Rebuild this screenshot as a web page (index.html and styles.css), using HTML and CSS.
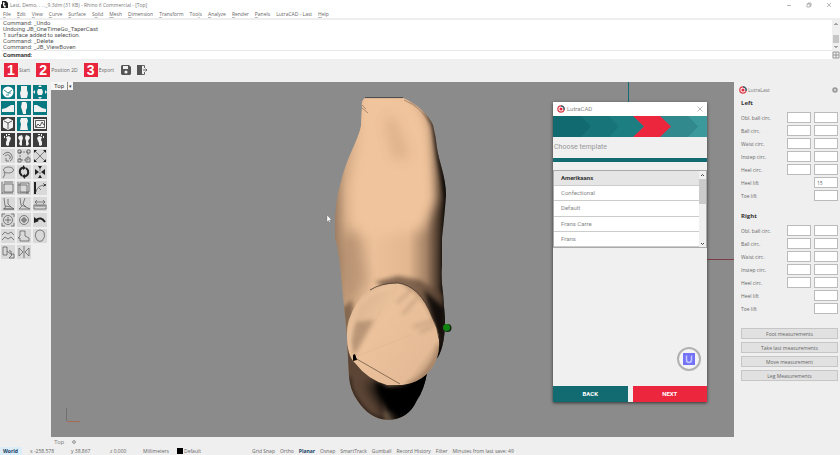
FILE: index.html
```html
<!DOCTYPE html>
<html lang="en">
<head>
<meta charset="utf-8">
<title>Last, Demo - Rhino 6 Commercial - [Top]</title>
<link rel="stylesheet" href="styles.css">
</head>
<body>
<header class="titlebar">
  <svg class="app-icon" viewBox="0 0 8 8"><path fill="#222" d="M1 0h4l2 2v5H1z"/><path fill="#fff" d="M2 1l2 1-1 2 2 1-1 2-2-2z"/><path fill="#222" d="M0 3l2 1 1 3H0z"/></svg>
  <h1 class="app-title">Last, Demo, . . ._9.3dm (31 KB) - Rhino 6 Commercial - [Top]</h1>
  <div class="window-controls">
    <button aria-label="Minimize"><svg viewBox="0 0 6 6"><path d="M1 3.500h4"/></svg></button>
    <button aria-label="Restore"><svg viewBox="0 0 6 6"><path d="M1 2h3v3H1zM2 2V1h3v3H4"/></svg></button>
    <button aria-label="Close"><svg viewBox="0 0 6 6"><path d="M1 1l4 4M5 1L1 5"/></svg></button>
  </div>
</header>
<nav class="menu">
  <a href="#"><u>F</u>ile</a><a href="#"><u>E</u>dit</a><a href="#"><u>V</u>iew</a><a href="#"><u>C</u>urve</a><a href="#"><u>S</u>urface</a><a href="#">S<u>o</u>lid</a><a href="#"><u>M</u>esh</a><a href="#"><u>D</u>imension</a><a href="#"><u>T</u>ransform</a><a href="#">Too<u>l</u>s</a><a href="#"><u>A</u>nalyze</a><a href="#"><u>R</u>ender</a><a href="#"><u>P</u>anels</a><a href="#">LutraCAD - Last</a><a href="#"><u>H</u>elp</a>
</nav>
<section class="console">
  <div class="console-text">
    <div class="history">
      <p>Command: _Undo</p>
      <p>Undoing JB_OneTimeGo_TaperCast</p>
      <p>1 surface added to selection.</p>
      <p>Command: _Delete</p>
      <p>Command: _JB_ViewBoven</p>
    </div>
    <div class="prompt"><label for="cmd">Command:</label><input id="cmd" type="text"></div>
  </div>
  <svg class="console-scroll" viewBox="0 0 8 39"><path fill="#f0f0f0" d="M0 0h8v39H0z"/><path fill="#c6c6c6" d="M1 15h6v8H1z"/><path fill="none" stroke="#555" d="M2.500 5L4 3.500 5.500 5M2.500 26L4 27.500 5.500 26"/><path fill="none" stroke="#888" stroke-width=".8" d="M1 32h6v6H1zM4 32v6M1 35h6"/></svg>
</section>
<div class="toolbar">
  <button class="step"><b>1</b><span>Start</span></button>
  <button class="step"><b>2</b><span>Position 2D</span></button>
  <button class="step"><b>3</b><span>Export</span></button>
  <button class="tool" aria-label="Save"><svg viewBox="0 0 12 12"><path fill="#555" d="M1 2l1-1h7l2 2v7l-1 1H2l-1-1z"/><path fill="#efefef" d="M3 2h5v3H3z"/><circle cx="6" cy="8" r="1.600" fill="#efefef"/></svg></button>
  <button class="tool" aria-label="Exit"><svg viewBox="0 0 12 12"><path fill="#555" d="M1 1h5v10H1z"/><path fill="none" stroke="#666" d="M6 1.500h2.500V4M6 10.500h2.500V8M7 6h4M9.500 4.500L11 6 9.500 7.500"/></svg></button>
</div>
<main class="workspace">
  <aside class="palette">
    <button class="teal" aria-label="Compass"><svg viewBox="0 0 14 14"><circle cx="7" cy="7" r="5.500" fill="#fff"/><path class="t" d="M3 5l4 3 4-3M7 8h3M5 10h3"/></svg></button>
    <button class="teal" aria-label="Last front"><svg viewBox="0 0 14 14"><path class="w" d="M4 1h6v4l1 3-1 5H4L3 8l1-3z"/></svg></button>
    <button class="teal" aria-label="Move view"><svg viewBox="0 0 14 14"><path class="w" d="M5 4h4l1 3-1 3H5L4 7zM7 0l2 2H5zM7 14l2-2H5zM0 7l2-2v4zM14 7l-2-2v4z"/></svg></button>
    <button class="teal" aria-label="Side left"><svg viewBox="0 0 14 14"><path class="w" d="M1 8l4-1 5-3h3v7H1z"/></svg></button>
    <button class="teal" aria-label="Top"><svg viewBox="0 0 14 14"><path class="w" d="M5 1h4l1 2v4l-1 2v4H6L5 9 4 6z"/></svg></button>
    <button class="teal" aria-label="Side right"><svg viewBox="0 0 14 14"><path class="w" d="M13 8L9 7 4 4H1v7h12z"/></svg></button>
    <button class="dark" aria-label="Perspective"><svg viewBox="0 0 14 14"><path class="w" d="M7 1l5 2.500v7L7 13l-5-2.500v-7z"/><path class="k" d="M3 4l4 2 4-2M7 6v6"/></svg></button>
    <button class="teal" aria-label="Last back"><svg viewBox="0 0 14 14"><path class="w" d="M4 1h6l1 3-1 3 1 6H3l1-6-1-3z"/></svg></button>
    <button class="dark" aria-label="Picture"><svg viewBox="0 0 14 14"><path class="w" d="M1 2h12v10H1z"/><path class="k" d="M2.500 3.500h9v7h-9zM3 10l2-3 2 2 2-4 2 3"/></svg></button>
    <button class="dark" aria-label="Left foot"><svg viewBox="0 0 14 14"><path class="w" d="M5 4l3-1 2 2-1 3-1 2v2l-1 1-2-1V9l1-2zM7 1h2v1H7zM5 1h1v2H5zM3 3h1v2H3z"/></svg></button>
    <button class="dark" aria-label="Both feet"><svg viewBox="0 0 14 14"><path class="w" d="M2 3l3-1 1 3-1 3v4l-1 1-2-2 1-3-2-3zM12 3L9 2 8 5l1 3v4l1 1 2-2-1-3 2-3z"/></svg></button>
    <button class="dark" aria-label="Right foot"><svg viewBox="0 0 14 14"><path class="w" d="M9 4L6 3 4 5l1 3 1 2v2l1 1 2-1V9L8 7zM5 1h2v1H5zM8 1h1v2H8zM10 3h1v2h-1z"/></svg></button>
    <button aria-label="Rotate"><svg viewBox="0 0 14 14"><path class="s" d="M2 6q4-5 8-1 3 5-1 7M4 7q3-3 5 0 1 3-1 3M5 9v3h3"/></svg></button>
    <button aria-label="Scale"><svg viewBox="0 0 14 14"><path class="s" stroke-dasharray="2 1" d="M3 3h8v8H3z"/><path class="s" d="M1 1h3v3H1zM10 1h3v3h-3zM1 10h3v3H1zM9 9h4v4H9z"/></svg></button>
    <button aria-label="Explode"><svg viewBox="0 0 14 14"><path class="s" stroke="#222" d="M2 2l10 10M12 2L2 12"/><path class="b" d="M1 1h3L1 4zM13 1v3l-3-3zM1 13v-3l3 3zM13 13h-3l3-3z"/></svg></button>
    <button aria-label="Lasso"><svg viewBox="0 0 14 14"><ellipse class="s" cx="7.500" cy="5" rx="5" ry="3"/><path class="s" d="M3 7l1 2-2 4"/></svg></button>
    <button aria-label="Cycle"><svg viewBox="0 0 14 14"><path class="h" d="M6 2.500Q2 4 3 8l2 3M8 11.500q4-1.500 3-6L9 3"/><path class="b" d="M6 0v5L9 3zM8 14V9l-3 2z"/></svg></button>
    <button aria-label="Mirror"><svg viewBox="0 0 14 14"><path class="s" stroke-dasharray="2 1" d="M7 1v12"/><path class="b" d="M2 4l4 3-4 3zM12 4L8 7l4 3zM5 1h4L7 4zM5 13h4l-2-3z"/></svg></button>
    <button aria-label="Bounding box"><svg viewBox="0 0 14 14"><path class="s" d="M3 3h9v8H3zM1 1v12M1 12h11M3 1h9"/></svg></button>
    <button aria-label="Box"><svg viewBox="0 0 14 14"><path class="s" d="M3 2h9v9H3zM1 4h9v9M1 1v11h11"/></svg></button>
    <button aria-label="Curve edit"><svg viewBox="0 0 14 14"><path class="h" d="M2 1v12"/><path class="s" d="M3 11q1-6 8-7M10 2l2 2-2 2M6 7l2 2"/><circle class="b" cx="12" cy="4" r="1"/></svg></button>
    <button aria-label="Heel left"><svg viewBox="0 0 14 14"><path class="s" stroke="#333" d="M3 1l1 8 6 1 3 2H3l2-3M7 2v5l3 3M2 12h11"/></svg></button>
    <button aria-label="Heel right"><svg viewBox="0 0 14 14"><path class="s" stroke="#333" d="M3 1l1 7 5 2 4 2H2l3-3M8 1L6 7l3 3"/></svg></button>
    <button aria-label="Ruler"><svg viewBox="0 0 14 14"><path class="s" d="M1 8h12v4H1zM3 8v2M5 8v2M7 8v2M9 8v2M11 8v2M2 5h10M4 3L2 5l2 2M10 3l2 2-2 2"/></svg></button>
    <button aria-label="Circle target"><svg viewBox="0 0 14 14"><circle class="s" cx="7" cy="7" r="4.500"/><path class="s" d="M7 4v6M4 7h6M1 4V1h3M10 1h3v3M1 10v3h3M10 13h3v-3"/></svg></button>
    <button aria-label="Circle center"><svg viewBox="0 0 14 14"><circle class="s" cx="7" cy="7" r="4.500"/><circle class="s" cx="7" cy="7" r="2"/><path class="s" d="M7 4v6M4 7h6"/></svg></button>
    <button aria-label="Undo"><svg viewBox="0 0 14 14"><path class="h" d="M3 7q5-4 9 2"/><path class="b" d="M1 4v6l5-2z"/></svg></button>
    <button aria-label="Waves"><svg viewBox="0 0 14 14"><path class="s" d="M1 6l3-3 3 2 3-2 3 3M1 11l3-3 3 2 3-2 3 3"/></svg></button>
    <button aria-label="Shoe"><svg viewBox="0 0 14 14"><path class="s" d="M3 2h5v5l4 2v3H3V9H1l2-2z"/></svg></button>
    <button aria-label="Sole"><svg viewBox="0 0 14 14"><path class="s" d="M3 3q4-4 8 0 2 5-2 9-3 1-5-1-3-4-1-8z"/></svg></button>
    <button aria-label="Drill"><svg viewBox="0 0 14 14"><path class="s" d="M2 2h4v8H2zM8 6h2v3h3v4H8l3-3-5-4"/></svg></button>
    <button aria-label="Flip"><svg viewBox="0 0 14 14"><path class="s" stroke="#999" d="M7 1v12M2 3l4 4-4 4zM12 3L8 7l4 4z"/></svg></button>
  </aside>
  <section class="viewport">
    <svg class="scene" viewBox="51 82 683 355" preserveAspectRatio="xMidYMin meet">
      <defs>
        <clipPath id="lastClip"><path d="M365 98H403Q424 107 433 125Q436 137 437 148C439 162 446 177 446 195Q445 210 442 238V265Q441 280 443 293L445 320Q445 345 438 357Q429 365 427 373Q424 390 417 400Q408 420 388 420Q369 419 357 400Q350 390 349 377L347 337L341 275Q339 252 335 238V218Q336 198 340 185Q345 165 353 148Q361 130 361 125L362 107Q361 101 365 98Z"/></clipPath>
        <clipPath id="discClip"><path id="disc" d="M398 283Q381 283 370 290Q361 295 357 303Q346 320 347 335Q347 356 355 363Q368 380 387 385H402Q425 382 435 363Q440 352 439 339Q438 328 432 317Q420 286 398 283Z"/></clipPath>
        <linearGradient id="skin" x1="335" x2="446" y1="0" y2="0" gradientUnits="userSpaceOnUse"><stop offset="0" stop-color="#a08065"/><stop offset=".1" stop-color="#cfa783"/><stop offset=".35" stop-color="#ecc19a"/><stop offset=".66" stop-color="#e3b891"/><stop offset=".82" stop-color="#a58266"/><stop offset=".95" stop-color="#3a2c21"/><stop offset="1" stop-color="#0e0a07"/></linearGradient>
        <linearGradient id="cap" x1="350" x2="438" y1="300" y2="365" gradientUnits="userSpaceOnUse"><stop offset="0" stop-color="#d9b38f"/><stop offset=".35" stop-color="#ebc29c"/><stop offset=".85" stop-color="#e4bb96"/><stop offset="1" stop-color="#b08c6e"/></linearGradient>
        <filter id="blur4" x="-50%" y="-50%" width="200%" height="200%"><feGaussianBlur stdDeviation="6"/></filter>
        <filter id="blur2" x="-50%" y="-50%" width="200%" height="200%"><feGaussianBlur stdDeviation="2"/></filter>
      </defs>
      <path stroke="#116b70" d="M628.500 82v20"/><path stroke="#7d3d45" d="M707 259.500h27"/>
      <g clip-path="url(#lastClip)">
        <path fill="url(#skin)" d="M330 90h120v335H330z"/>
        <path fill="#f0c49c" filter="url(#blur4)" d="M358 92h42q26 12 31 38l4 50 1 20-14 30-56 8-16-14-2-35 10-45z"/>
        <path fill="#b38c69" opacity=".3" filter="url(#blur4)" d="M384 118l10 0 16 38-16 4z"/>
        <path fill="#8e6e54" opacity=".35" filter="url(#blur4)" d="M345 232l14 4 10 44-24 30-10-50z"/>
        <path fill="none" stroke="#000" stroke-width="3" filter="url(#blur2)" d="M412 99l12 6 10 20 5 33 9 42-4 45v60l3 40"/>
        <path fill="#5b4534" opacity=".7" filter="url(#blur2)" d="M375 282l23-6 22 4 24 15v60l-20-45z"/>
        <path fill="#6d543f" opacity=".75" filter="url(#blur2)" d="M340 310l12-10 6 60 6 15-20 5z"/>
        <path fill="#050302" opacity=".8" filter="url(#blur2)" d="M424 290l20 18v60l-10-10 5-20z"/>
        <path fill="#5b4534" filter="url(#blur2)" d="M340 345h20l25 30v50h-45z"/>
        <path fill="#000" filter="url(#blur4)" d="M366 382l24 5 40-24 20-10v75h-58l-10-22z"/>
        <path fill="#000" filter="url(#blur2)" d="M374 382l14 5h18l32-24v40l-30 12-20-5z"/>
        <path fill="none" stroke="#000" stroke-width="2" filter="url(#blur2)" d="M349 377q0 13 8 23 12 20 31 20"/>
        <path fill="none" stroke="#9c7a5e" stroke-width=".8" d="M362 108l6 5M361 104l5 5M404 100q18 7 26 25"/>
      </g>
      <g clip-path="url(#discClip)">
        <path fill="url(#cap)" d="M340 280h105v110H340z"/>
        <path fill="#8e6e54" opacity=".5" filter="url(#blur2)" d="M374 320l-20 36-3-14 5-20z"/>
        <path fill="none" stroke="#b59175" stroke-width="2" opacity=".8" filter="url(#blur2)" d="M411 290l-14 13M418 297l-15 17M435 320l-22 7M438 324l-18 8"/>
        <path fill="none" stroke="#6d523e" stroke-width="2" opacity=".7" filter="url(#blur2)" d="M404 284q22 10 31 37M439 345q-5 30-32 40"/>
        <path fill="none" stroke="#f3cba6" stroke-width="2" filter="url(#blur2)" d="M393 286l-20 6-16 14-8 24v20"/>
      </g>
      <path fill="none" stroke="#34261c" stroke-width=".7" d="M398 283Q420 286 432 317Q438 328 439 339M398 283Q381 283 370 290"/>
      <path fill="none" stroke="#d8b08b" stroke-width=".5" opacity=".7" d="M355 357l26-47M355 357l58-23"/>
      <path fill="none" stroke="#4b3828" stroke-width=".6" d="M355 358l45 26"/>
      <path d="M353 355l2-1 1 3 1 3-4 1z"/>
      <path stroke="#37373b" stroke-width=".8" d="M365 97.600h38"/>
      <circle cx="447.500" cy="328" r="4" fill="#102a0d"/><circle cx="446.500" cy="327.500" r="3.500" fill="#118211"/>
      <path fill="#fff" stroke="#555" stroke-width=".3" d="M327 215v7l1.500-1.500 1 2 1-.5-1-2h2z"/>
      <path fill="none" stroke="#707070" d="M66.500 408v13"/><path stroke="#a66a52" d="M67 421.500h13"/>
    </svg>
    <div class="view-label"><button>Top</button><button aria-label="View menu">▾</button></div>
    <div class="dialog" role="dialog" aria-label="LutraCAD">
      <div class="dialog-title">
        <svg class="logo" viewBox="0 0 8 8"><circle cx="4" cy="4" r="3.200" fill="#fff" stroke="#d83d4a" stroke-width="1.200"/><path fill="none" stroke="#176b75" stroke-width="1.200" d="M4 .8a3.200 3.200 0 0 1 3 4"/><circle cx="4" cy="4" r="1.600" fill="#e8253c"/></svg>
        <span>LutraCAD</span>
        <button aria-label="Close dialog"><svg viewBox="0 0 6 6"><path d="M.5.5l5 5M5.500.5l-5 5"/></svg></button>
      </div>
      <svg class="steps" viewBox="0 0 154 21" preserveAspectRatio="none"><path fill="#3b989b" d="M0 0h154v21H0z"/><path fill="#32898d" d="M100 0h35l10 10.500L135 21h-35z"/><path fill="#1d7e82" d="M0 0h81l10 10.500L81 21H0z"/><path fill="#17757a" d="M0 0h56l10 10.500L56 21H0z"/><path fill="#106a70" d="M0 0h28l10 10.500L28 21H0z"/><path fill="#ec263d" d="M80 0h27l11 10.500L107 21H80l11-10.500z"/></svg>
      <h2>Choose template</h2>
      <div class="rule"></div>
      <div class="list">
        <ul><li class="selected">Amerikaans</li><li>Confectional</li><li>Default</li><li>Frans Carre</li><li>Frans</li></ul>
        <svg class="list-scroll" viewBox="0 0 7 76"><path fill="#f0f0f0" d="M0 0h7v76H0z"/><path fill="#cbcbcb" d="M0 8h7v25H0z"/><path fill="none" stroke="#444" d="M2 5l1.500-1.500L5 5M2 72l1.500 1.500L5 72"/></svg>
      </div>
      <div class="dialog-body">
        <svg class="badge" viewBox="0 0 24 24"><circle cx="12" cy="12" r="11" fill="#f4f4f4" stroke="#b2b2b2" stroke-width="2"/><path fill="#7472f8" d="M6 6h12v12H6z"/><path fill="none" stroke="#c3c8ff" stroke-width="1.500" d="M9.500 8.500V13q0 2.500 2.500 2.500t2.500-2.500V8.500"/></svg>
      </div>
      <div class="dialog-actions"><button class="back">BACK</button><button class="next">NEXT</button></div>
    </div>
  </section>
  <aside class="panel">
    <div class="panel-head">
      <svg class="logo" viewBox="0 0 8 8"><circle cx="4" cy="4" r="3.200" fill="#fff" stroke="#d83d4a" stroke-width="1.200"/><path fill="none" stroke="#176b75" stroke-width="1.200" d="M4 .8a3.200 3.200 0 0 1 3 4"/><circle cx="4" cy="4" r="1.600" fill="#e8253c"/></svg>
      <span>LutraLast</span>
      <button aria-label="Settings"><svg viewBox="0 0 6 6"><circle cx="3" cy="3" r="2" fill="#ccc" stroke="#999" stroke-width="1.500"/></svg></button>
    </div>
    <form>
      <h3>Left</h3>
      <div class="row"><label for="l1">Obl. ball circ.</label><input id="l1"><input aria-label="Obl. ball circ. 2"></div>
      <div class="row"><label for="l2">Ball circ.</label><input id="l2"><input aria-label="Ball circ. 2"></div>
      <div class="row"><label for="l3">Waist circ.</label><input id="l3"><input aria-label="Waist circ. 2"></div>
      <div class="row"><label for="l4">Instep circ.</label><input id="l4"><input aria-label="Instep circ. 2"></div>
      <div class="row"><label for="l5">Heel circ.</label><input id="l5"><input aria-label="Heel circ. 2"></div>
      <div class="row"><label for="l6">Heel lift</label><input id="l6" value="15"></div>
      <div class="row"><label for="l7">Toe lift</label><input id="l7"></div>
      <h3 class="second">Right</h3>
      <div class="row"><label for="r1">Obl. ball circ.</label><input id="r1"><input aria-label="Obl. ball circ. 2"></div>
      <div class="row"><label for="r2">Ball circ.</label><input id="r2"><input aria-label="Ball circ. 2"></div>
      <div class="row"><label for="r3">Waist circ.</label><input id="r3"><input aria-label="Waist circ. 2"></div>
      <div class="row"><label for="r4">Instep circ.</label><input id="r4"><input aria-label="Instep circ. 2"></div>
      <div class="row"><label for="r5">Heel circ.</label><input id="r5"><input aria-label="Heel circ. 2"></div>
      <div class="row"><label for="r6">Heel lift</label><input id="r6"></div>
      <div class="row"><label for="r7">Toe lift</label><input id="r7"></div>
      <div class="actions"><button type="button">Foot measurements</button><button type="button">Take last measurements</button><button type="button">Move measurement</button><button type="button">Leg Measurements</button></div>
    </form>
  </aside>
</main>
<div class="view-tabs"><button>Top</button><button aria-label="Add view"><svg viewBox="0 0 6 6"><path d="M3 1v4M1 3h4M3 1l2 2-2 2-2-2z"/></svg></button></div>
<footer class="status">
  <div class="coords"><b class="world">World</b><span>x -258.578</span><span>y 38.867</span><span>z 0.000</span><span>Millimeters</span><span class="layer">Default</span></div>
  <div class="modes"><span>Grid Snap</span><span>Ortho</span><b>Planar</b><span>Osnap</span><span>SmartTrack</span><span>Gumball</span><span>Record History</span><span>Filter</span><span>Minutes from last save: 49</span></div>
</footer>
</body>
</html>
```
FILE: styles.css
```css
* { box-sizing: border-box; }
body { margin: 0; min-height: 100vh; display: flex; flex-direction: column; background: #efefef; color: #666; font: 6px/8px Roboto, "Noto Sans", sans-serif; }
h1, h2, h3, p, ul { margin: 0; padding: 0; font: inherit; list-style: none; }
button { margin: 0; padding: 0; border: 0; background: none; color: inherit; font: inherit; }
input { margin: 0; padding: 0 2px; min-width: 0; border: 0; font: inherit; color: inherit; }
svg { display: block; }
a { color: inherit; text-decoration: none; }

.titlebar, .menu, .toolbar, .panel, .status { font-family: "Open Sans", "Noto Sans", sans-serif; font-size: 5px; }
.titlebar { display: flex; align-items: center; gap: 1px; height: 10px; background: #fff; color: #777; }
.app-icon { width: 8px; height: 8px; margin-left: 1px; }
.window-controls { display: flex; gap: 14px; margin-left: auto; padding-right: 8px; }
.window-controls svg { width: 6px; height: 6px; fill: none; stroke: #888; stroke-width: 0.6; }
.menu { display: flex; gap: 6px; height: 10px; padding: 0 3px; background: #fff; border-bottom: 2px solid #eee; }
.menu u { text-decoration-thickness: 1px; text-decoration-color: #bbb; }
.console { display: flex; height: 39px; background: #fff; color: #555; }
.console-text { flex: 1; display: flex; flex-direction: column; padding-left: 1px; }
.history { display: flex; flex-direction: column; justify-content: flex-end; height: 31px; padding-left: 2px; line-height: 6px; border-bottom: 1px solid #e8e8e8; }
.prompt { display: flex; padding-left: 2px; color: #333; font-weight: 700; }
.prompt input { flex: 1; height: 8px; }
.console-scroll { width: 8px; height: 39px; }

.toolbar { display: flex; align-items: center; gap: 6px; height: 23px; padding: 0 4px 2px; color: #666; }
.step { display: flex; align-items: center; gap: 1px; }
.step b { width: 14px; background: #e8253c; color: #fff; font: 700 14px/14px "Liberation Sans", sans-serif; }
.tool svg { width: 12px; height: 12px; }
.tool + .tool { margin-left: -2px; }

.workspace { flex: 1; display: flex; }
.palette { flex: none; display: grid; grid-template-columns: repeat(3, 14px); grid-auto-rows: 14px; align-content: start; gap: 2px; width: 51px; padding: 3px 1px; }
.palette button { background: #d9d9d9; }
.palette .teal { background: #087980; }
.palette .dark { background: #3c3c3c; }
.palette svg { width: 14px; height: 14px; }
.w { fill: #f2f2f2; }
.b { fill: #222; }
.s { fill: none; stroke: #555; stroke-width: 0.7; }
.t { fill: none; stroke: #087980; stroke-width: 0.8; }
.k { fill: none; stroke: #333; stroke-width: 0.8; }
.h { fill: none; stroke: #222; stroke-width: 2; }

.viewport { position: relative; flex: 1; background: #8b8b8b; }
.scene { width: 100%; }
.view-label { position: absolute; top: 0; left: 0; display: flex; gap: 1px; height: 8px; }
.view-label button { padding: 0 3px; background: #f6f6f6; color: #333; }
.view-label button + button { padding: 0 1px; font-size: 5px; }

.dialog { position: absolute; top: 20px; right: 27px; display: flex; flex-direction: column; width: 154px; height: 300px; background: #f0f0f0; box-shadow: 0 1px 3px #333; }
.dialog-title { display: flex; align-items: center; gap: 2px; height: 14px; padding: 0 4px; background: #fff; color: #888; }
.logo { width: 8px; height: 8px; }
.dialog-title button { margin-left: auto; }
.dialog-title button svg { width: 6px; height: 6px; fill: none; stroke: #999; stroke-width: 0.7; }
.steps { width: 100%; height: 21px; }
.dialog h2 { height: 21px; padding-left: 1px; color: #999; font-size: 7px; line-height: 20px; }
.rule { height: 4px; margin-bottom: 8px; background: #116b70; }
.list { display: flex; border: 1px solid #aaa; background: #fff; }
.list ul { flex: 1; display: grid; grid-auto-rows: 1fr; }
.list li { padding-left: 7px; border-bottom: 1px solid #ccc; color: #888; line-height: 14px; }
.list .selected { background: #e5e5e5; color: #333; font-weight: 700; }
.list-scroll { width: 7px; height: 76px; }
.dialog-body { flex: 1; display: flex; align-items: flex-end; justify-content: flex-end; padding: 0 6px 15px; }
.badge { width: 24px; height: 24px; }
.dialog-actions { display: grid; grid-template-columns: 1fr 1fr; gap: 5px; }
.dialog-actions button { height: 16px; color: #fff; font-weight: 700; }
.back { background: #116b70; }
.next { background: #ec263d; }

.panel { flex: none; width: 106px; padding: 4px 2px 0 7px; }
.panel-head { display: flex; align-items: center; gap: 1px; height: 8px; margin-left: -2px; color: #777; }
.panel-head button { margin-left: auto; }
.panel-head button svg { width: 6px; height: 6px; }
.panel h3 { margin: 5px 0; color: #333; font-weight: 700; font-size: 6px; }
.panel h3.second { margin-top: 11px; }
.row { display: flex; align-items: center; gap: 3px; margin-bottom: 2px; }
.row label { flex: 1; color: #666; }
.row input { width: 24px; height: 11px; border: 1px solid #bbb; background: #fff; }
.actions { display: grid; gap: 3px; margin-top: 14px; }
.actions button { height: 11px; border: 1px solid #c6c6c6; background: #e1e1e1; line-height: 8px; }

.view-tabs { display: flex; gap: 7px; height: 10px; padding-left: 54px; line-height: 10px; color: #888; }
.view-tabs svg { width: 6px; height: 6px; fill: none; stroke: #999; stroke-width: 0.7; }
.status { display: flex; height: 8px; }
.coords { display: grid; grid-template-columns: 30px 41px 39px 33px 34px 75px; }
.world { padding-left: 3px; margin-right: 8px; background: #dcecf8; color: #164064; }
.layer { display: flex; align-items: center; gap: 1px; }
.layer::before { content: ""; width: 6px; height: 6px; background: #000; }
.modes { display: flex; gap: 5px; }
.modes b { color: #164064; }
```
